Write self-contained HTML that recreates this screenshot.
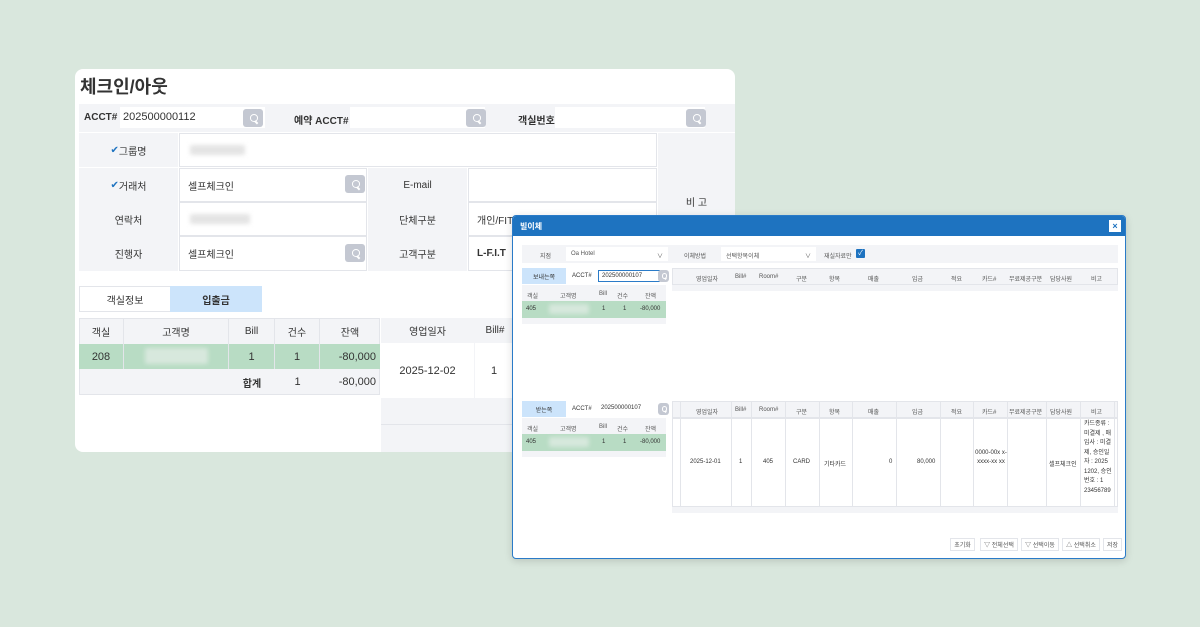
<!DOCTYPE html>
<html><head><meta charset="utf-8"><style>
*{margin:0;padding:0;box-sizing:border-box}
body{width:1200px;height:627px;background:#d9e7dd;font-family:"Liberation Sans","Noto Sans CJK KR",sans-serif;position:relative;overflow:hidden;color:#333}
.a{position:absolute}
.c{display:flex;align-items:center;justify-content:center}
.r{display:flex;align-items:center;justify-content:flex-end;padding-right:4px}
.l{display:flex;align-items:center;padding-left:8px}
.lb{background:#f3f4f7}
.bd{border:1px solid #e3e5ea}
.sb{background:#c4c8d2;border-radius:3px}
.sb::after{content:"";position:absolute;left:35%;top:28%;width:32%;height:32%;border:1.5px solid #fff;border-radius:50%}
.sb::before{content:"";position:absolute;left:62%;top:60%;width:18%;height:1.5px;background:#fff;transform:rotate(45deg);transform-origin:left center}
.blur{background:#e4e4e4;filter:blur(2px);border-radius:2px}
.g{background:#b8dcc4}
.t11{font-size:11px}
.t10{font-size:10px}
.t9{font-size:6px;color:#555}
</style></head><body>

<!-- LEFT PANEL -->
<div class="a" style="left:75px;top:69px;width:660px;height:383px;background:#fff;border-radius:8px;overflow:hidden">
 <div class="a" style="left:5px;top:4px;font-size:18px;font-weight:bold;color:#333">체크인/아웃</div>
 <div class="a lb" style="left:4px;top:35px;width:656px;height:28px"></div>
 <div class="a t10" style="left:9px;top:43px;font-weight:bold">ACCT#</div>
 <div class="a t11" style="left:45px;top:38px;width:145px;height:21px;background:#fff;padding:4px 3px">202500000112</div>
 <div class="a sb" style="left:168px;top:40px;width:20px;height:18px"></div>
 <div class="a t10" style="left:219px;top:43px;font-weight:bold">예약 ACCT#</div>
 <div class="a" style="left:275px;top:38px;width:135px;height:21px;background:#fff"></div>
 <div class="a sb" style="left:391px;top:40px;width:20px;height:18px"></div>
 <div class="a t10" style="left:443px;top:43px;font-weight:bold">객실번호</div>
 <div class="a" style="left:480px;top:38px;width:150px;height:21px;background:#fff"></div>
 <div class="a sb" style="left:611px;top:40px;width:20px;height:18px"></div>

 <!-- grid -->
 <div class="a lb c t10" style="left:4px;top:64px;width:99px;height:34px"><span style="color:#1e73c0">✔</span>그룹명</div>
 <div class="a bd" style="left:104px;top:64px;width:478px;height:34px"></div>
 <div class="a blur" style="left:115px;top:76px;width:55px;height:10px"></div>
 <div class="a lb c t10" style="left:583px;top:64px;width:77px;height:137px">비 고</div>

 <div class="a lb c t10" style="left:4px;top:99px;width:99px;height:34px"><span style="color:#1e73c0">✔</span>거래처</div>
 <div class="a bd l t10" style="left:104px;top:99px;width:188px;height:34px">셀프체크인</div>
 <div class="a sb" style="left:270px;top:106px;width:20px;height:18px"></div>
 <div class="a lb c t10" style="left:293px;top:99px;width:99px;height:34px">E-mail</div>
 <div class="a bd" style="left:393px;top:99px;width:189px;height:34px"></div>

 <div class="a lb c t10" style="left:4px;top:133px;width:99px;height:34px">연락처</div>
 <div class="a bd" style="left:104px;top:133px;width:188px;height:34px"></div>
 <div class="a blur" style="left:115px;top:145px;width:60px;height:10px"></div>
 <div class="a lb c t10" style="left:293px;top:133px;width:99px;height:34px">단체구분</div>
 <div class="a bd l t10" style="left:393px;top:133px;width:189px;height:34px">개인/FIT</div>

 <div class="a lb c t10" style="left:4px;top:167px;width:99px;height:35px">진행자</div>
 <div class="a bd l t10" style="left:104px;top:167px;width:188px;height:35px">셀프체크인</div>
 <div class="a sb" style="left:270px;top:175px;width:20px;height:18px"></div>
 <div class="a lb c t10" style="left:293px;top:167px;width:99px;height:35px">고객구분</div>
 <div class="a bd l t10" style="left:393px;top:167px;width:189px;height:35px;font-weight:bold">L-F.I.T</div>

 <!-- tabs -->
 <div class="a bd c t10" style="left:4px;top:217px;width:92px;height:26px">객실정보</div>
 <div class="a c t10" style="left:95px;top:217px;width:92px;height:26px;background:#cce4fb;font-weight:bold">입출금</div>

 <!-- table -->
 <div class="a lb" style="left:4px;top:249px;width:301px;height:77px;border:1px solid #e3e5ea"></div>
 <div class="a c t10" style="left:4px;top:249px;width:45px;height:26px;border-right:1px solid #e3e5ea">객실</div>
 <div class="a c t10" style="left:49px;top:249px;width:105px;height:26px;border-right:1px solid #e3e5ea">고객명</div>
 <div class="a c t10" style="left:154px;top:249px;width:46px;height:26px;border-right:1px solid #e3e5ea">Bill</div>
 <div class="a c t10" style="left:200px;top:249px;width:45px;height:26px;border-right:1px solid #e3e5ea">건수</div>
 <div class="a c t10" style="left:245px;top:249px;width:60px;height:26px">잔액</div>
 <div class="a g c t11" style="left:4px;top:275px;width:45px;height:25px;border-right:1px solid #e3e5ea">208</div>
 <div class="a g" style="left:49px;top:275px;width:105px;height:25px;border-right:1px solid #e3e5ea"></div>
 <div class="a blur" style="left:70px;top:279px;width:63px;height:16px;background:#d7e8dd"></div>
 <div class="a g c t11" style="left:154px;top:275px;width:46px;height:25px;border-right:1px solid #e3e5ea">1</div>
 <div class="a g c t11" style="left:200px;top:275px;width:45px;height:25px;border-right:1px solid #e3e5ea">1</div>
 <div class="a g r t11" style="left:245px;top:275px;width:60px;height:25px">-80,000</div>
 <div class="a c t10" style="left:154px;top:300px;width:46px;height:26px;font-weight:bold">합계</div>
 <div class="a c t11" style="left:200px;top:300px;width:45px;height:26px">1</div>
 <div class="a r t11" style="left:245px;top:300px;width:60px;height:26px">-80,000</div>

 <div class="a lb" style="left:306px;top:249px;width:354px;height:134px"></div>
 <div class="a c t10" style="left:306px;top:249px;width:93px;height:25px">영업일자</div>
 <div class="a c t10" style="left:400px;top:249px;width:40px;height:25px">Bill#</div>
 <div class="a c t11" style="left:306px;top:274px;width:93px;height:55px;background:#fff">2025-12-02</div>
 <div class="a c t11" style="left:400px;top:274px;width:260px;height:55px;background:#fff;justify-content:flex-start;padding-left:16px">1</div>
 <div class="a" style="left:306px;top:355px;width:354px;height:1px;background:#e3e5ea"></div>
</div>

<!-- MODAL -->
<div class="a" style="left:512px;top:215px;width:614px;height:344px;background:#fff;border:1px solid #2a7bc8;border-radius:4px;overflow:hidden;box-shadow:0 2px 8px rgba(0,0,0,.15)">
 <div class="a" style="left:0;top:0;width:614px;height:20px;background:#1e73c0"></div>
 <div class="a" style="left:7px;top:5px;font-size:8px;color:#fff;font-weight:bold">빌이체</div>
 <div class="a c" style="left:596px;top:4px;width:12px;height:12px;background:#fff;font-size:9px;color:#1e73c0;font-weight:bold">×</div>

 <div class="a lb" style="left:9px;top:29px;width:596px;height:18px"></div>
 <div class="a t9" style="left:27px;top:35px">지점</div>
 <div class="a t9" style="left:53px;top:31px;width:102px;height:14px;background:#fff;padding:4px 5px">Oa Hotel<span style="float:right">∨</span></div>
 <div class="a t9" style="left:171px;top:35px">이체방법</div>
 <div class="a t9" style="left:208px;top:31px;width:95px;height:14px;background:#fff;padding:4px 5px">선택항목이체<span style="float:right">∨</span></div>
 <div class="a t9" style="left:311px;top:35px">재실자료만</div>
 <div class="a" style="left:343px;top:33px;width:9px;height:9px;background:#1e73c0;border-radius:1px;color:#fff;font-size:7px;line-height:9px;text-align:center">✓</div>

 <!-- top sender -->
 <div class="a c t9" style="left:9px;top:52px;width:44px;height:16px;background:#cce4fb;color:#333">보내는쪽</div>
 <div class="a t9" style="left:59px;top:57px;color:#333">ACCT#</div>
 <div class="a t9" style="left:85px;top:54px;width:62px;height:12px;border:1px solid #2a7bc8;padding:2px 3px;color:#333">202500000107</div>
 <div class="a sb" style="left:145px;top:54px;width:11px;height:12px"></div>
 <div class="a lb" style="left:9px;top:69px;width:144px;height:16px"></div>
 <div class="a t9" style="left:14px;top:75px">객실</div><div class="a t9" style="left:47px;top:75px">고객명</div><div class="a t9" style="left:86px;top:75px">Bill</div><div class="a t9" style="left:104px;top:75px">건수</div><div class="a t9" style="left:132px;top:75px">잔액</div>
 <div class="a g" style="left:9px;top:85px;width:144px;height:17px"></div>
 <div class="a t9" style="left:13px;top:90px;color:#333">405</div><div class="a blur" style="left:36px;top:88px;width:40px;height:10px;background:#d6e8dc"></div><div class="a t9" style="left:89px;top:90px;color:#333">1</div><div class="a t9" style="left:110px;top:90px;color:#333">1</div><div class="a t9" style="left:127px;top:90px;color:#333">-80,000</div>
 <div class="a lb" style="left:9px;top:102px;width:144px;height:6px"></div>

 <div class="a lb" style="left:159px;top:52px;width:446px;height:17px;border:1px solid #e3e5ea"></div>
 <div class="a lb" style="left:159px;top:69px;width:446px;height:6px"></div>

 <!-- bottom receiver -->
 <div class="a c t9" style="left:9px;top:185px;width:44px;height:16px;background:#cce4fb;color:#333">받는쪽</div>
 <div class="a t9" style="left:59px;top:190px;color:#333">ACCT#</div>
 <div class="a t9" style="left:85px;top:187px;width:62px;height:12px;padding:2px 3px;color:#333">202500000107</div>
 <div class="a sb" style="left:145px;top:187px;width:11px;height:12px"></div>
 <div class="a lb" style="left:9px;top:202px;width:144px;height:16px"></div>
 <div class="a t9" style="left:14px;top:208px">객실</div><div class="a t9" style="left:47px;top:208px">고객명</div><div class="a t9" style="left:86px;top:208px">Bill</div><div class="a t9" style="left:104px;top:208px">건수</div><div class="a t9" style="left:132px;top:208px">잔액</div>
 <div class="a g" style="left:9px;top:218px;width:144px;height:17px"></div>
 <div class="a t9" style="left:13px;top:223px;color:#333">405</div><div class="a blur" style="left:36px;top:221px;width:40px;height:10px;background:#d6e8dc"></div><div class="a t9" style="left:89px;top:223px;color:#333">1</div><div class="a t9" style="left:110px;top:223px;color:#333">1</div><div class="a t9" style="left:127px;top:223px;color:#333">-80,000</div>
 <div class="a lb" style="left:9px;top:235px;width:144px;height:6px"></div>

 <div class="a lb" style="left:159px;top:185px;width:446px;height:17px;border:1px solid #e3e5ea"></div>
 <div class="a" style="left:159px;top:202px;width:446px;height:89px;border:1px solid #e3e5ea"></div>
 <div class="a lb" style="left:159px;top:291px;width:446px;height:6px"></div>

 <div class="a t9" style="left:183px;top:58px">영업일자</div><div class="a t9" style="left:222px;top:58px">Bill#</div><div class="a t9" style="left:246px;top:58px">Room#</div><div class="a t9" style="left:283px;top:58px">구분</div><div class="a t9" style="left:316px;top:58px">항목</div><div class="a t9" style="left:355px;top:58px">매출</div><div class="a t9" style="left:399px;top:58px">입금</div><div class="a t9" style="left:438px;top:58px">적요</div><div class="a t9" style="left:469px;top:58px">카드#</div><div class="a t9" style="left:496px;top:58px">무료제공구분</div><div class="a t9" style="left:537px;top:58px">담당사원</div><div class="a t9" style="left:578px;top:58px">비고</div>
 <div class="a t9" style="left:183px;top:191px">영업일자</div><div class="a t9" style="left:222px;top:191px">Bill#</div><div class="a t9" style="left:246px;top:191px">Room#</div><div class="a t9" style="left:283px;top:191px">구분</div><div class="a t9" style="left:316px;top:191px">항목</div><div class="a t9" style="left:355px;top:191px">매출</div><div class="a t9" style="left:399px;top:191px">입금</div><div class="a t9" style="left:438px;top:191px">적요</div><div class="a t9" style="left:469px;top:191px">카드#</div><div class="a t9" style="left:496px;top:191px">무료제공구분</div><div class="a t9" style="left:537px;top:191px">담당사원</div><div class="a t9" style="left:578px;top:191px">비고</div>
 <div class="a" style="left:167px;top:185px;width:1px;height:106px;background:#e3e5ea"></div>
 <div class="a" style="left:218px;top:185px;width:1px;height:106px;background:#e3e5ea"></div>
 <div class="a" style="left:238px;top:185px;width:1px;height:106px;background:#e3e5ea"></div>
 <div class="a" style="left:272px;top:185px;width:1px;height:106px;background:#e3e5ea"></div>
 <div class="a" style="left:306px;top:185px;width:1px;height:106px;background:#e3e5ea"></div>
 <div class="a" style="left:339px;top:185px;width:1px;height:106px;background:#e3e5ea"></div>
 <div class="a" style="left:383px;top:185px;width:1px;height:106px;background:#e3e5ea"></div>
 <div class="a" style="left:427px;top:185px;width:1px;height:106px;background:#e3e5ea"></div>
 <div class="a" style="left:460px;top:185px;width:1px;height:106px;background:#e3e5ea"></div>
 <div class="a" style="left:494px;top:185px;width:1px;height:106px;background:#e3e5ea"></div>
 <div class="a" style="left:533px;top:185px;width:1px;height:106px;background:#e3e5ea"></div>
 <div class="a" style="left:567px;top:185px;width:1px;height:106px;background:#e3e5ea"></div>
 <div class="a" style="left:601px;top:185px;width:1px;height:106px;background:#e3e5ea"></div>
 <div class="a t9" style="left:177px;top:243px;color:#333">2025-12-01</div>
 <div class="a t9" style="left:226px;top:243px;color:#333">1</div>
 <div class="a t9" style="left:250px;top:243px;color:#333">405</div>
 <div class="a t9" style="left:280px;top:243px;color:#333">CARD</div>
 <div class="a t9" style="left:311px;top:243px;color:#333">기타카드</div>
 <div class="a t9" style="left:376px;top:243px;color:#333">0</div>
 <div class="a t9" style="left:404px;top:243px;color:#333">80,000</div>
 <div class="a t9" style="left:462px;top:233px;color:#333;width:32px;text-align:center;line-height:9px">0000-00x x-xxxx-xx xx</div>
 <div class="a t9" style="left:536px;top:243px;color:#333">셀프체크인</div>
 <div class="a t9" style="left:571px;top:204px;color:#333;width:30px;line-height:9.5px">카드종류 : 미결제 , 매입사 : 미결제, 승인일자 : 2025 1202, 승인번호 : 1 23456789</div>

 <div class="a c t9 bd" style="left:437px;top:322px;width:25px;height:13px">초기화</div>
 <div class="a c t9 bd" style="left:467px;top:322px;width:38px;height:13px">▽ 전체선택</div>
 <div class="a c t9 bd" style="left:508px;top:322px;width:38px;height:13px">▽ 선택이동</div>
 <div class="a c t9 bd" style="left:549px;top:322px;width:38px;height:13px">△ 선택취소</div>
 <div class="a c t9 bd" style="left:590px;top:322px;width:19px;height:13px">저장</div>
</div>
</body></html>
